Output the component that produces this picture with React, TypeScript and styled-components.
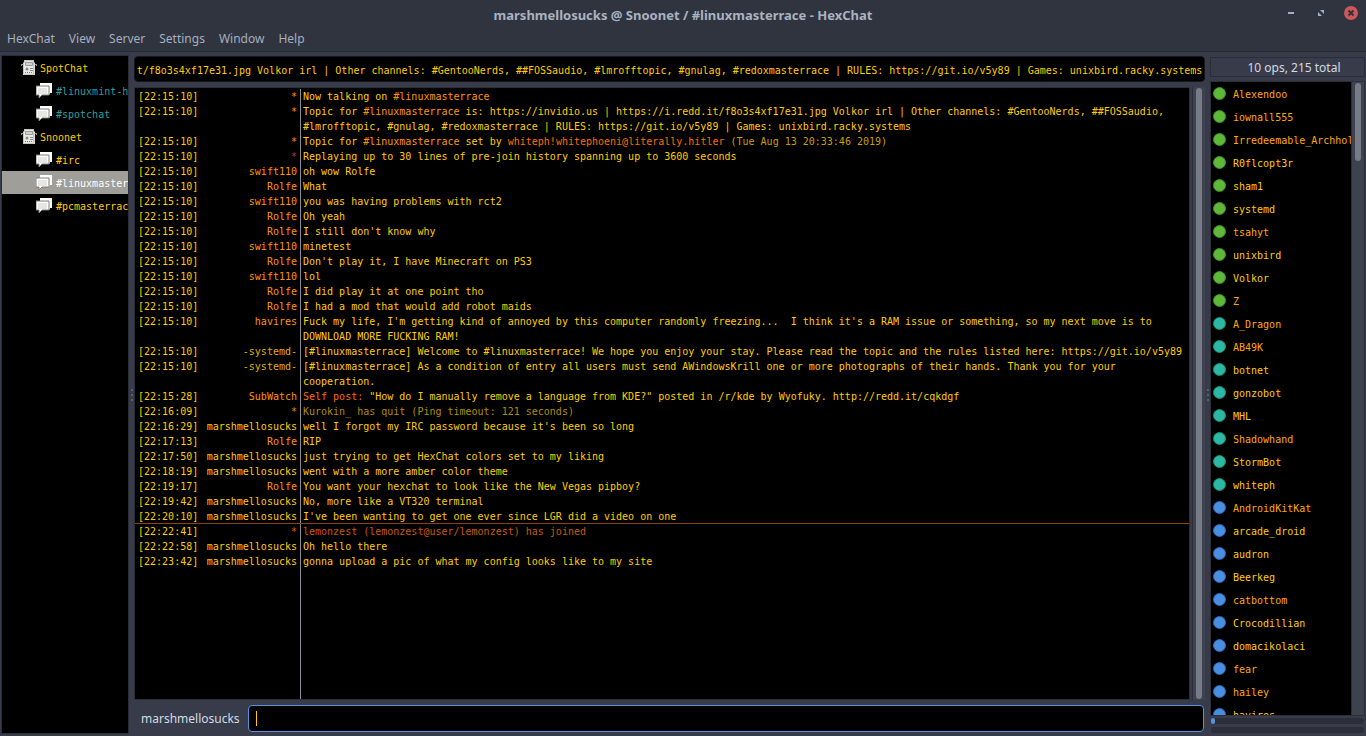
import React from "react";
import styled, { createGlobalStyle } from "styled-components";

const MONO = '"DejaVu Sans Mono", "Liberation Mono", monospace';
const GOLD = "#ffcc00";
const ORANGE = "#ff9400";
const RED = "#ff6a00";

const Global = createGlobalStyle`
  *, *::before, *::after { box-sizing: border-box; }
  html, body, #root { height: 100%; margin: 0; }
  body { background: #383c4a; color: #d3dae3; font: 12px/18px "Noto Sans", sans-serif; overflow: hidden; }
  ul, ol { list-style: none; margin: 0; padding: 0; }
  button { font: inherit; color: inherit; background: none; border: 0; padding: 0; }
`;

const Shell = styled.div`
  height: 100vh;
  display: flex;
  flex-direction: column;
`;

const TitleBar = styled.header`
  flex: none;
  height: 28px;
  display: grid;
  grid-template-columns: 1fr auto 1fr;
  align-items: center;
  background: #2f343f;
  color: #a9b2c0;
`;

const Title = styled.h1`
  grid-column: 2;
  margin: 0;
  padding-top: 2px;
  font-size: 13px;
  line-height: 20px;
  font-weight: 700;
`;

const WindowButtons = styled.div`
  display: flex;
  justify-content: flex-end;
  gap: 14px;
  padding-right: 7px;
`;

const WindowButton = styled.button`
  width: 16px;
  height: 16px;
  svg { display: block; }
`;

const MenuBar = styled.nav`
  flex: none;
  height: 24px;
  display: flex;
  align-items: flex-start;
  gap: 14px;
  padding: 2px 7px 0;
  background: #2f343f;
  border-bottom: 1px solid #262a33;
  color: #a5afbf;
`;

const MenuItem = styled.button`
  line-height: 18px;
`;

const Workspace = styled.main`
  flex: 1;
  min-height: 0;
  display: flex;
  padding: 3px 1px 2px 1px;
`;

const Tree = styled.ul`
  width: 128px;
  flex: none;
  overflow: hidden;
  background: #000;
  border: 1px solid #2b2e39;
`;

const TreeRow = styled.li<{ $child?: boolean; $active?: boolean; $tone?: string }>`
  height: 23px;
  display: flex;
  align-items: center;
  gap: ${(p) => (p.$child ? 4 : 3)}px;
  padding-left: ${(p) => (p.$child ? 34 : 18)}px;
  background: ${(p) => (p.$active ? "#a09e98" : "transparent")};
  color: ${(p) => p.$tone || GOLD};
  font: 10px/15px ${MONO};
  white-space: nowrap;
  svg { flex: none; }
`;

const RowName = styled.span`
  padding-top: 2px;
`;

const Grip = styled.div`
  width: 5px;
  flex: none;
  display: flex;
  flex-direction: column;
  align-items: center;
  justify-content: center;
  gap: 3px;
  i { width: 2px; height: 2px; background: #5b606e; }
`;

const Center = styled.section`
  flex: 1;
  min-width: 0;
  display: flex;
  flex-direction: column;
  padding-bottom: 2px;
`;

const Topic = styled.input`
  height: 26px;
  flex: none;
  width: 100%;
  margin-top: 1px;
  padding: 2px 0 0;
  border: 1px solid #16181f;
  border-radius: 4px;
  background: #000;
  color: ${GOLD};
  font: 10px/15px ${MONO};
  text-align: center;
  outline: none;
`;

const LogFrame = styled.div`
  flex: 1;
  min-height: 0;
  display: flex;
  gap: 2px;
  margin-top: 5px;
`;

const Log = styled.ol`
  flex: 1;
  min-width: 0;
  overflow: hidden;
  display: flex;
  flex-direction: column;
  padding-top: 1px;
  background: #000;
  border: 1px solid #2b2e39;
`;

const Line = styled.li<{ $marker?: boolean }>`
  display: grid;
  grid-template-columns: 59px 104px 1fr;
  font: 10px/15px ${MONO};
  color: ${GOLD};
  box-shadow: ${(p) => (p.$marker ? "0 -1px #8a4500" : "none")};
  padding-left: 3px;
`;

const Nick = styled.span<{ $tone: string }>`
  text-align: right;
  padding-right: 3px;
  border-right: 1px solid #8d8a9c;
  color: ${(p) => p.$tone};
`;

const Message = styled.span<{ $tone?: string }>`
  padding: 0 2px;
  color: ${(p) => p.$tone || "inherit"};
  white-space: pre-wrap;
`;

const Tone = styled.span<{ $tone: string }>`
  color: ${(p) => p.$tone};
`;

const Rest = styled.li`
  flex: 1;
  width: 166px;
  border-right: 1px solid #8d8a9c;
`;

const ScrollTrack = styled.div`
  width: 13px;
  flex: none;
  padding: 1px 3px;
  background: #3e424f;
  border-left: 1px solid #2b2e39;
`;

const ScrollThumb = styled.div<{ $size: string }>`
  width: 6px;
  height: ${(p) => p.$size};
  border-radius: 3px;
  background: #767b87;
`;

const InputRow = styled.div`
  flex: none;
  display: flex;
  align-items: center;
  gap: 8px;
  margin-top: 5px;
  padding: 0 1px 0 7px;
`;

const ChatInput = styled.input`
  flex: 1;
  min-width: 0;
  height: 27px;
  padding: 0 7px;
  border: 1px solid #5294e2;
  border-radius: 4px;
  background: linear-gradient(${GOLD}, ${GOLD}) 7px center / 1px 15px no-repeat #000;
  color: ${GOLD};
  caret-color: transparent;
  font: 10px/15px ${MONO};
  outline: none;
`;

const Side = styled.aside`
  width: 155px;
  flex: none;
  display: flex;
  flex-direction: column;
`;

const Count = styled.div`
  height: 20px;
  flex: none;
  margin-top: 2px;
  text-align: center;
  line-height: 20px;
  padding-left: 13px;
  border: 1px solid #2b2e39;
`;

const UserFrame = styled.div`
  flex: 1;
  min-height: 0;
  display: flex;
  margin-top: 4px;
  border: 1px solid #2b2e39;
`;

const Users = styled.ul`
  flex: 1;
  min-width: 0;
  overflow: hidden;
  background: #000;
`;

const User = styled.li<{ $tone: string }>`
  height: 23px;
  display: flex;
  align-items: center;
  gap: 7px;
  padding-left: 2px;
  color: ${(p) => p.$tone};
  font: 10px/15px ${MONO};
  white-space: nowrap;
`;

const Dot = styled.i<{ $color: string; $edge: string }>`
  width: 13px;
  height: 13px;
  flex: none;
  border-radius: 50%;
  background: ${(p) => p.$color};
  border: 1px solid ${(p) => p.$edge};
`;

const Meter = styled.div`
  height: 6px;
  flex: none;
  margin: 2px 1px 1px;
  border-radius: 3px;
  background: #2b2e39;
`;

const MeterFill = styled.div`
  width: 4px;
  height: 6px;
  border-radius: 2px;
  background: #5294e2;
`;

const ServerIcon = () => (
  <svg width="17" height="17" viewBox="0 0 17 17" aria-hidden="true">
    <path d="M4 1h10v2l1 1v12H3V4l1-1z" fill="#dededc" />
    <path d="M4.500 1.500h9v14h-10v-11l1-1z" fill="#e9e9e7" stroke="#c4c4c1" />
    <path d="M1 5.500h2M15 5.500h2M1 6.500h1M16 6.500h1" stroke="#8b8b88" />
    <path d="M5.500 3.500h7v3h-7z" fill="#d2d2cf" stroke="#9c9c99" />
    <path d="M10 9.500h3M10 11.500h3" stroke="#8a8a87" />
    <circle cx="7" cy="10" r="1.500" fill="#8a8a87" />
    <path d="M5 13.500h1M7 13.500h1M9 13.500h1M11 13.500h1" stroke="#777" />
  </svg>
);

const ChatIcon = () => (
  <svg width="16" height="16" viewBox="0 0 16 16" aria-hidden="true">
    <path d="M4 0h12v10h-2v2l-2-2H4z" fill="#fff" />
    <path d="M0 3h13v9H6l-3 3v-3H0z" fill="#fff" stroke="#7d7d7a" strokeWidth="1" />
    <path d="M2 5h9v6H2z" fill="#e6e6e4" />
  </svg>
);

const tree = [
  { name: "SpotChat" },
  { name: "#linuxmint-help", child: true, tone: "#2f9d9d" },
  { name: "#spotchat", child: true, tone: "#2f9d9d" },
  { name: "Snoonet" },
  { name: "#irc", child: true },
  { name: "#linuxmasterrace", child: true, active: true, tone: "#ffffff" },
  { name: "#pcmasterrace", child: true },
];

type Entry = { t: string; n: string; c: string; m: React.ReactNode; mc?: string; marker?: boolean };
const chan = <Tone $tone={ORANGE}>#linuxmasterrace</Tone>;
const me = "marshmellosucks";
const log: Entry[] = [
  { t: "22:15:10", n: "*", c: ORANGE, m: <>Now talking on {chan}</> },
  { t: "22:15:10", n: "*", c: ORANGE, m: <>Topic for {chan} is: https://invidio.us | https://i.redd.it/f8o3s4xf17e31.jpg Volkor irl | Other channels: #GentooNerds, ##FOSSaudio, #lmrofftopic, #gnulag, #redoxmasterrace | RULES: https://git.io/v5y89 | Games: unixbird.racky.systems</> },
  { t: "22:15:10", n: "*", c: ORANGE, m: <>Topic for {chan} set by <Tone $tone={RED}>whiteph!whitephoeni@literally.hitler</Tone> <Tone $tone="#c79f00">(Tue Aug 13 20:33:46 2019)</Tone></> },
  { t: "22:15:10", n: "*", c: "#a0405c", m: "Replaying up to 30 lines of pre-join history spanning up to 3600 seconds" },
  { t: "22:15:10", n: "swift110", c: ORANGE, m: "oh wow Rolfe" },
  { t: "22:15:10", n: "Rolfe", c: ORANGE, m: "What" },
  { t: "22:15:10", n: "swift110", c: ORANGE, m: "you was having problems with rct2" },
  { t: "22:15:10", n: "Rolfe", c: ORANGE, m: "Oh yeah" },
  { t: "22:15:10", n: "Rolfe", c: ORANGE, m: "I still don't know why" },
  { t: "22:15:10", n: "swift110", c: ORANGE, m: "minetest" },
  { t: "22:15:10", n: "Rolfe", c: ORANGE, m: "Don't play it, I have Minecraft on PS3" },
  { t: "22:15:10", n: "swift110", c: ORANGE, m: "lol" },
  { t: "22:15:10", n: "Rolfe", c: ORANGE, m: "I did play it at one point tho" },
  { t: "22:15:10", n: "Rolfe", c: ORANGE, m: "I had a mod that would add robot maids" },
  { t: "22:15:10", n: "havires", c: ORANGE, m: "Fuck my life, I'm getting kind of annoyed by this computer randomly freezing...  I think it's a RAM issue or something, so my next move is to DOWNLOAD MORE FUCKING RAM!" },
  { t: "22:15:10", n: "-systemd-", c: "#dfae00", m: "[#linuxmasterrace] Welcome to #linuxmasterrace! We hope you enjoy your stay. Please read the topic and the rules listed here: https://git.io/v5y89" },
  { t: "22:15:10", n: "-systemd-", c: "#dfae00", m: "[#linuxmasterrace] As a condition of entry all users must send AWindowsKrill one or more photographs of their hands. Thank you for your cooperation." },
  { t: "22:15:28", n: "SubWatch", c: ORANGE, m: <><Tone $tone={RED}>Self post:</Tone> "How do I manually remove a language from KDE?" posted in /r/kde by Wyofuky. http://redd.it/cqkdgf</> },
  { t: "22:16:09", n: "*", c: "#c79f00", m: "Kurokin_ has quit (Ping timeout: 121 seconds)", mc: "#b08d00" },
  { t: "22:16:29", n: me, c: GOLD, m: "well I forgot my IRC password because it's been so long" },
  { t: "22:17:13", n: "Rolfe", c: ORANGE, m: "RIP" },
  { t: "22:17:50", n: me, c: GOLD, m: "just trying to get HexChat colors set to my liking" },
  { t: "22:18:19", n: me, c: GOLD, m: "went with a more amber color theme" },
  { t: "22:19:17", n: "Rolfe", c: ORANGE, m: "You want your hexchat to look like the New Vegas pipboy?" },
  { t: "22:19:42", n: me, c: GOLD, m: "No, more like a VT320 terminal" },
  { t: "22:20:10", n: me, c: GOLD, m: "I've been wanting to get one ever since LGR did a video on one" },
  { t: "22:22:41", n: "*", c: "#d86400", m: "lemonzest (lemonzest@user/lemonzest) has joined", mc: "#c85a00", marker: true },
  { t: "22:22:58", n: me, c: GOLD, m: "Oh hello there" },
  { t: "22:23:42", n: me, c: GOLD, m: "gonna upload a pic of what my config looks like to my site" },
];

const GREEN = ["#5fb83a", "#3f8d25"];
const TEAL = ["#2bb8a5", "#1a8a6d"];
const BLUE = ["#4a8ee0", "#2f63b5"];
const groups: [string[], string[]][] = [
  [GREEN, ["Alexendoo", "iownall555", "Irredeemable_Archholy", "R0flcopt3r", "sham1", "systemd", "tsahyt", "unixbird", "Volkor", "Z"]],
  [TEAL, ["A_Dragon", "AB49K", "botnet", "gonzobot", "MHL", "Shadowhand", "StormBot", "whiteph"]],
  [BLUE, ["AndroidKitKat", "arcade_droid", "audron", "Beerkeg", "catbottom", "Crocodillian", "domacikolaci", "fear", "hailey", "havires"]],
];
const awayUsers = new Set([
  "Alexendoo", "iownall555", "Irredeemable_Archholy", "tsahyt", "Z", "A_Dragon", "AB49K",
  "Shadowhand", "AndroidKitKat", "catbottom", "fear", "hailey",
]);

export default function App() {
  return (
    <Shell>
      <Global />
      <TitleBar>
        <Title>marshmellosucks @ Snoonet / #linuxmasterrace - HexChat</Title>
        <WindowButtons>
          <WindowButton aria-label="Minimize">
            <svg width="16" height="16"><path d="M5 7h6" stroke="#a5afbf" strokeWidth="2" /></svg>
          </WindowButton>
          <WindowButton aria-label="Restore">
            <svg width="16" height="16"><path d="M7 4h4v4l-1-1-1-1zM5 6l4 4H5z" fill="#a5afbf" /></svg>
          </WindowButton>
          <WindowButton aria-label="Close">
            <svg width="16" height="16"><circle cx="8" cy="7" r="7" fill="#cc575d" /><path d="M5.500 4.500l5 5m0-5l-5 5" stroke="#2f343f" strokeWidth="2" /></svg>
          </WindowButton>
        </WindowButtons>
      </TitleBar>
      <MenuBar>
        {["HexChat", "View", "Server", "Settings", "Window", "Help"].map((m) => <MenuItem key={m}>{m}</MenuItem>)}
      </MenuBar>
      <Workspace>
        <Tree>
          {tree.map((r) => (
            <TreeRow key={r.name} $child={r.child} $active={r.active} $tone={r.tone}>
              {r.child ? <ChatIcon /> : <ServerIcon />}
              <RowName>{r.name}</RowName>
            </TreeRow>
          ))}
        </Tree>
        <Grip><i /><i /><i /></Grip>
        <Center>
          <Topic aria-label="Topic" readOnly defaultValue="t/f8o3s4xf17e31.jpg Volkor irl | Other channels: #GentooNerds, ##FOSSaudio, #lmrofftopic, #gnulag, #redoxmasterrace | RULES: https://git.io/v5y89 | Games: unixbird.racky.systems" />
          <LogFrame>
            <Log>
              {log.map((l, i) => (
                <Line key={i} $marker={l.marker}>
                  <span>[{l.t}]</span>
                  <Nick $tone={l.c}>{l.n}</Nick>
                  <Message $tone={l.mc}>{l.m}</Message>
                </Line>
              ))}
              <Rest aria-hidden="true" />
            </Log>
            <ScrollTrack><ScrollThumb $size="100%" /></ScrollTrack>
          </LogFrame>
          <InputRow>
            <label htmlFor="message">marshmellosucks</label>
            <ChatInput id="message" autoFocus />
          </InputRow>
        </Center>
        <Grip><i /><i /><i /></Grip>
        <Side>
          <Count>10 ops, 215 total</Count>
          <UserFrame>
            <Users>
              {groups.map(([c, names]) => names.map((n) => (
                <User key={n} $tone={awayUsers.has(n) ? "#ffa800" : GOLD}>
                  <Dot $color={c[0]} $edge={c[1]} />
                  <RowName>{n}</RowName>
                </User>
              )))}
            </Users>
            <ScrollTrack><ScrollThumb $size="78px" /></ScrollTrack>
          </UserFrame>
          <Meter><MeterFill /></Meter>
          <Meter />
        </Side>
      </Workspace>
    </Shell>
  );
}
